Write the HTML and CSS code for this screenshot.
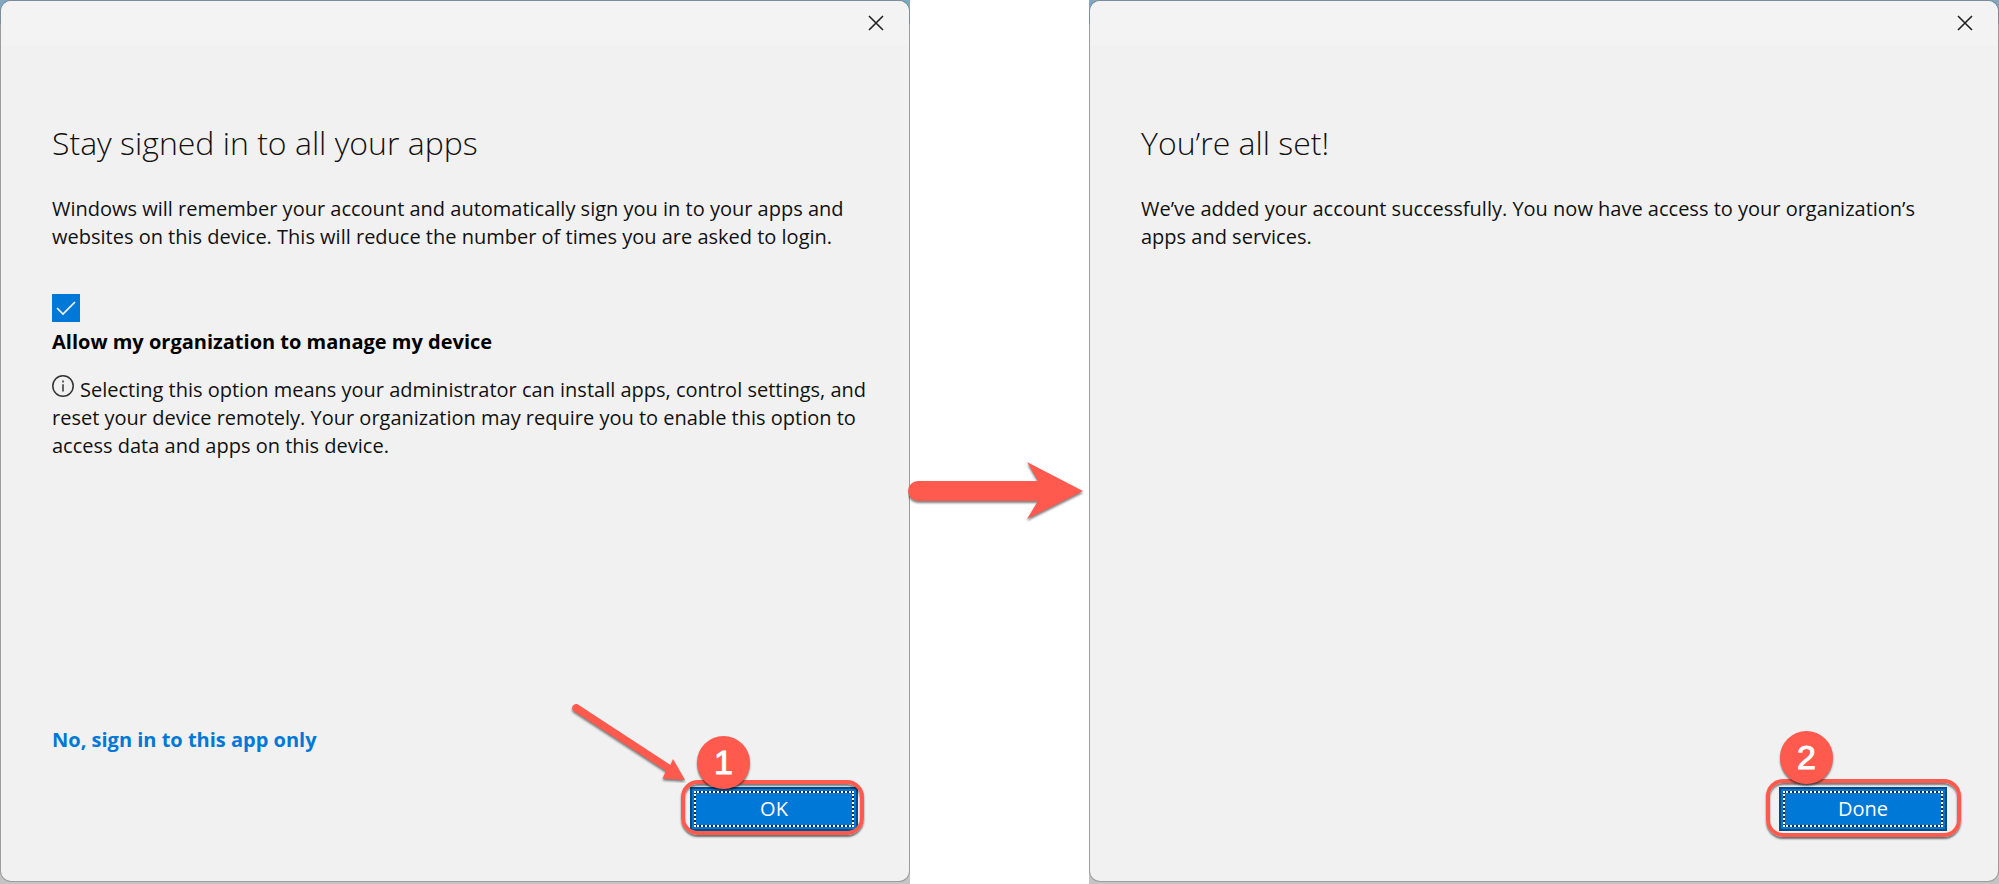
FILE: index.html
```html
<!DOCTYPE html>
<html lang="en">
<head>
<meta charset="utf-8">
<title>Stay signed in to all your apps</title>
<link rel="stylesheet" href="styles.css">
</head>
<body>
<main class="steps">
  <div class="backdrop">
    <section class="window">
      <header class="titlebar">
        <button class="close" aria-label="Close"><svg width="16" height="16" viewBox="0 0 16 16"><path d="M1 1 15 15M15 1 1 15"/></svg></button>
      </header>
      <div class="content">
        <h1 class="title">Stay signed in to all your apps</h1>
        <p class="text">Windows will remember your account and automatically sign you in to your apps and websites on this device. This will reduce the number of times you are asked to login.</p>
        <div class="option">
          <span class="box"><input type="checkbox" id="manage" checked><svg class="tick" width="28" height="28" viewBox="0 0 28 28"><path d="M5 14 11 20 23 8"/></svg></span>
          <label for="manage">Allow my organization to manage my device</label>
        </div>
        <p class="text note"><svg class="info" width="22" height="22" viewBox="0 0 22 22"><circle cx="11" cy="11" r="10.2"/><path d="M11 9.300V16.500M11 5.500V7.500"/></svg>Selecting this option means your administrator can install apps, control settings, and reset your device remotely. Your organization may require you to enable this option to access data and apps on this device.</p>
        <footer class="footer">
          <a class="link" href="#">No, sign in to this app only</a>
          <div class="action">
            <button class="primary"><span class="focus"></span>OK</button>
            <span class="ring ring-ok"></span>
            <svg class="pointer" width="120" height="84" viewBox="0 0 120 84"><path class="shape" d="M8.200 5.100A4 4 0 0 0 4 11.400L97 72 93.500 79.500 116 81 104 60 101.500 66Z"/></svg>
            <span class="badge badge-one">1</span>
          </div>
        </footer>
      </div>
    </section>
  </div>
  <div class="between">
    <svg class="arrow" width="180" height="70" viewBox="0 0 180 70"><path class="shape" d="M10 24H130L119 5 175 34 119 62 130 44H10A10 10 0 0 1 10 24Z"/></svg>
  </div>
  <div class="backdrop">
    <section class="window">
      <header class="titlebar">
        <button class="close" aria-label="Close"><svg width="16" height="16" viewBox="0 0 16 16"><path d="M1 1 15 15M15 1 1 15"/></svg></button>
      </header>
      <div class="content">
        <h1 class="title">You’re all set!</h1>
        <p class="text">We’ve added your account successfully. You now have access to your organization’s apps and services.</p>
        <footer class="footer">
          <div class="action">
            <button class="primary"><span class="focus"></span>Done</button>
            <span class="ring ring-done"></span>
            <span class="badge badge-two">2</span>
          </div>
        </footer>
      </div>
    </section>
  </div>
</main>
</body>
</html>
```
FILE: styles.css
```css
* { box-sizing: border-box; }
body {
  margin: 0;
  background: #fff;
  color: #111;
  font: 20px/28px "Open Sans", "Noto Sans", sans-serif;
}
.steps {
  display: grid;
  grid-template-columns: 1fr 179px 1fr;
  min-height: 100vh;
}
.backdrop {
  display: grid;
  padding: 1px 1px 3px;
  background: linear-gradient(#82a7c1 24px, #c4c4c4 24px);
}
.window {
  display: flex;
  flex-direction: column;
  background: #f1f1f1;
  border-radius: 10px;
  box-shadow: 0 0 0 1px rgba(110, 110, 110, 0.45);
}
.titlebar {
  display: flex;
  justify-content: flex-end;
  align-items: center;
  height: 44px;
  padding-right: 12px;
  background: #f3f3f3;
  border-radius: 10px 10px 0 0;
}
.close {
  display: grid;
  place-items: center;
  width: 42px;
  height: 42px;
  padding: 0;
  border: 0;
  background: none;
}
.close svg { fill: none; stroke: #222; stroke-width: 1.6; }
.content {
  display: flex;
  flex: 1;
  flex-direction: column;
  padding: 78px 51px 50px;
}
.title {
  margin: 0 0 32px;
  font-size: 32px;
  font-weight: 350;
  line-height: 40px;
}
.text { margin: 0; }
.option {
  display: flex;
  flex-direction: column;
  gap: 6px;
  margin-top: 43px;
  color: #000;
  font-weight: 700;
}
.box { display: grid; width: 28px; height: 28px; }
.box input {
  grid-area: 1 / 1;
  width: 28px;
  height: 28px;
  margin: 0;
  appearance: none;
  background: #0078d7;
}
.tick {
  grid-area: 1 / 1;
  fill: none;
  stroke: #fff;
  stroke-width: 1.6;
  pointer-events: none;
}
.note { margin: 19px -20px 0 0; }
.info {
  margin-right: 6px;
  vertical-align: 0;
  fill: none;
  stroke: #333;
  stroke-width: 1.5;
}
.footer {
  display: flex;
  flex-direction: column;
  align-items: flex-start;
  gap: 33px;
  margin-top: auto;
}
.link { color: #0078d7; font-weight: 700; text-decoration: none; }
.action { position: relative; align-self: flex-end; }
.primary {
  display: grid;
  place-items: center;
  position: relative;
  isolation: isolate;
  width: 168px;
  height: 44px;
  padding: 0;
  border: 2px solid #004c87;
  background: #0078d7;
  color: #fff;
  font: inherit;
}
.focus {
  position: absolute;
  inset: 2px;
  z-index: -1;
  border: 2px dotted #fff;
  background: linear-gradient(#0078d7, #0078d7) padding-box, linear-gradient(#1c2a38, #1c2a38) border-box;
}
.ring {
  position: absolute;
  border: 4px solid #ff5a4d;
  border-radius: 17px;
  box-shadow: 0 2px 2px rgba(0, 0, 0, 0.55), inset 0 2px 2px rgba(0, 0, 0, 0.5);
}
.ring-ok { inset: -7px -6px -4px -9px; }
.ring-done { inset: -8px -14px -6px -13px; }
.badge {
  display: grid;
  place-items: center;
  position: absolute;
  width: 53px;
  height: 53px;
  border-radius: 50%;
  background: #ff5a4d;
  box-shadow: 0 2px 2px rgba(0, 0, 0, 0.5);
  color: #fff;
  font: 400 34px/53px "Liberation Sans", Arial, sans-serif;
  -webkit-text-stroke: 1px #fff;
}
.badge-one { top: -51px; left: 7px; }
.badge-two { top: -56px; left: 1px; }
.shape { fill: #ff5a4d; filter: drop-shadow(0 2px 1px rgba(0, 0, 0, 0.5)); }
.pointer { position: absolute; top: -88px; left: -121px; }
.between { position: relative; }
.arrow { position: absolute; top: 457px; left: -2px; }
```
